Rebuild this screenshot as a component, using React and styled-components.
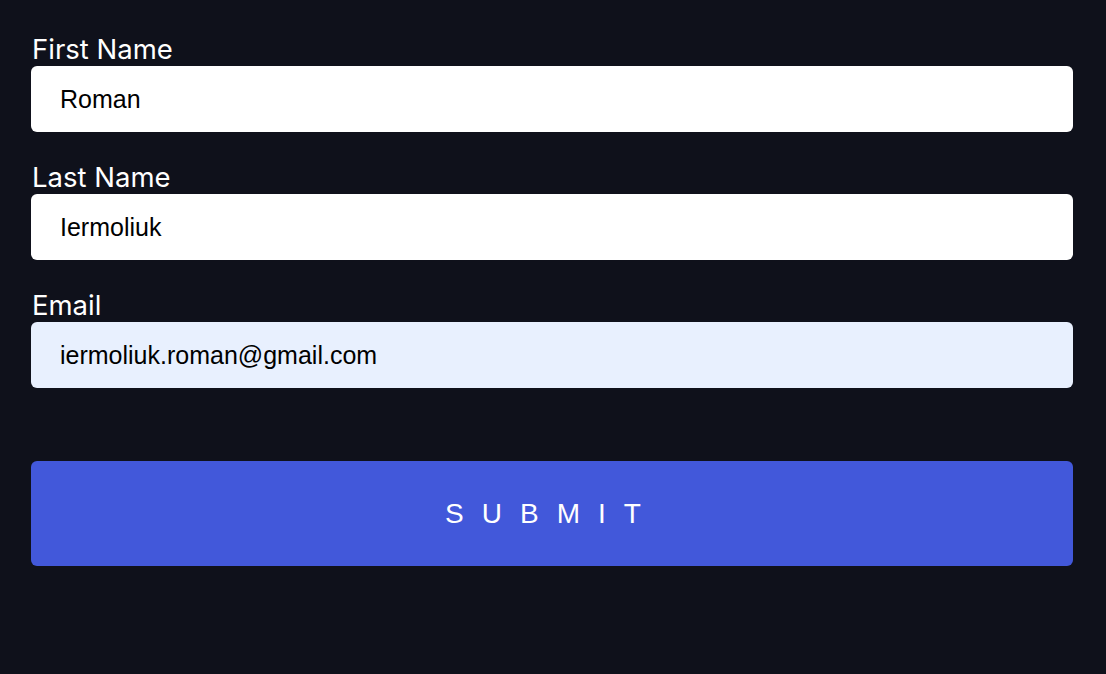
import React from 'react';
import styled, { createGlobalStyle } from 'styled-components';

const GlobalStyle = createGlobalStyle`
  html, body {
    margin: 0;
    padding: 0;
    background: #0f111b;
  }
  * {
    box-sizing: border-box;
  }
`;

const Page = styled.div`
  min-height: 674px;
  background: #0f111b;
  padding: 38px 33px 0 31px;
`;

const Form = styled.form`
  display: flex;
  flex-direction: column;
`;

const Field = styled.div`
  display: flex;
  flex-direction: column;
  margin-bottom: 34px;
`;

const Label = styled.label`
  display: block;
  color: #ffffff;
  font-family: Inter, "Noto Sans", sans-serif;
  font-size: 27.5px;
  line-height: 22px;
  margin-bottom: 6px;
  padding-left: 1px;
`;

const Input = styled.input`
  height: 66px;
  width: 100%;
  border: none;
  border-radius: 6px;
  padding: 0 28px 0 29px;
  font-family: "Liberation Sans", Arial, sans-serif;
  font-size: 25px;
  color: #000;
  background: ${props => (props.autofilled ? '#e8f0fe' : '#ffffff')};
  outline: none;
`;

const SubmitButton = styled.button`
  margin-top: 39px;
  height: 105px;
  width: 100%;
  border: none;
  border-radius: 6px;
  background: #4258da;
  color: #ffffff;
  font-family: "Liberation Sans", Arial, sans-serif;
  font-size: 28px;
  letter-spacing: 18px;
  cursor: pointer;
`;

export default function App() {
  return (
    <>
      <GlobalStyle />
      <Page>
        <Form onSubmit={e => e.preventDefault()}>
          <Field>
            <Label htmlFor="first">First Name</Label>
            <Input id="first" defaultValue="Roman" />
          </Field>
          <Field>
            <Label htmlFor="last">Last Name</Label>
            <Input id="last" defaultValue="Iermoliuk" />
          </Field>
          <Field>
            <Label htmlFor="email">Email</Label>
            <Input id="email" autofilled defaultValue="iermoliuk.roman@gmail.com" />
          </Field>
          <SubmitButton type="submit">SUBMIT</SubmitButton>
        </Form>
      </Page>
    </>
  );
}
